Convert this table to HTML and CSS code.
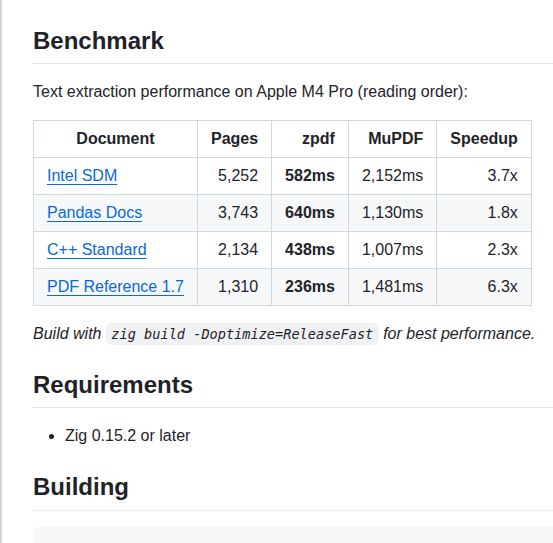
FILE: index.html
```html
<!DOCTYPE html>
<html lang="en">
<head>
<meta charset="utf-8">
<title>README</title>
<link rel="stylesheet" href="styles.css">
</head>
<body>
<article class="markdown-body">
  <h2 class="first">Benchmark</h2>
  <p>Text extraction performance on Apple M4 Pro (reading order):</p>
  <table>
    <thead>
      <tr>
        <th class="center">Document</th>
        <th class="right">Pages</th>
        <th class="right">zpdf</th>
        <th class="right">MuPDF</th>
        <th class="right">Speedup</th>
      </tr>
    </thead>
    <tbody>
      <tr>
        <td><a href="#">Intel SDM</a></td>
        <td class="right">5,252</td>
        <td class="right"><strong>582ms</strong></td>
        <td class="right">2,152ms</td>
        <td class="right">3.7x</td>
      </tr>
      <tr>
        <td><a href="#">Pandas Docs</a></td>
        <td class="right">3,743</td>
        <td class="right"><strong>640ms</strong></td>
        <td class="right">1,130ms</td>
        <td class="right">1.8x</td>
      </tr>
      <tr>
        <td><a href="#">C++ Standard</a></td>
        <td class="right">2,134</td>
        <td class="right"><strong>438ms</strong></td>
        <td class="right">1,007ms</td>
        <td class="right">2.3x</td>
      </tr>
      <tr>
        <td><a href="#">PDF Reference 1.7</a></td>
        <td class="right">1,310</td>
        <td class="right"><strong>236ms</strong></td>
        <td class="right">1,481ms</td>
        <td class="right">6.3x</td>
      </tr>
    </tbody>
  </table>
  <p><em>Build with <code>zig build -Doptimize=ReleaseFast</code> for best performance.</em></p>
  <h2>Requirements</h2>
  <ul>
    <li>Zig 0.15.2 or later</li>
  </ul>
  <h2>Building</h2>
  <pre><code>zig build -Doptimize=ReleaseFast</code></pre>
</article>
</body>
</html>
```

FILE: styles.css
```css
html, body {
  margin: 0;
  padding: 0;
  overflow: hidden;
  background: #ffffff;
}

.markdown-body {
  width: 900px;
  border-left: 2px solid #d1d9e0;
  padding: 26px 32px 0 31px;
  font-family: "Liberation Sans", Arial, sans-serif;
  font-size: 16px;
  line-height: 1.5;
  color: #1f2328;
}

.markdown-body h2 {
  font-size: 24px;
  font-weight: 600;
  line-height: 1.25;
  margin: 24px 0 16px;
  padding-bottom: 7.2px;
  border-bottom: 1px solid #e4e8ec;
}

.markdown-body h2.first {
  margin-top: 0;
}

.markdown-body p {
  margin: 0 0 16px;
}

.markdown-body a {
  color: #0969da;
  text-decoration: underline;
  text-underline-offset: 0.2rem;
}

.markdown-body table {
  border-collapse: collapse;
  border-spacing: 0;
  margin: 0 0 16px;
}

.markdown-body th,
.markdown-body td {
  padding: 6px 13px;
  border: 1px solid #d1d9e0;
}

.markdown-body th {
  font-weight: 600;
}

.markdown-body tbody tr:nth-child(2n) {
  background: #f6f8fa;
}

.markdown-body td strong {
  font-weight: 600;
}

.center {
  text-align: center;
}

.right {
  text-align: right;
}

.markdown-body td:first-child {
  text-align: left;
}

.markdown-body code {
  font-family: "DejaVu Sans Mono", "Liberation Mono", monospace;
  font-size: 13.6px;
  padding: 0.2em 0.4em;
  background: #eff1f3;
  border-radius: 6px;
  white-space: nowrap;
}

.markdown-body ul {
  margin: 0 0 16px;
  padding-left: 2em;
}

.markdown-body pre {
  margin: 0 0 16px;
  padding: 16px;
  background: #f6f8fa;
  border-radius: 6px;
}

.markdown-body pre code {
  padding: 0;
  background: transparent;
  font-style: normal;
}
```
